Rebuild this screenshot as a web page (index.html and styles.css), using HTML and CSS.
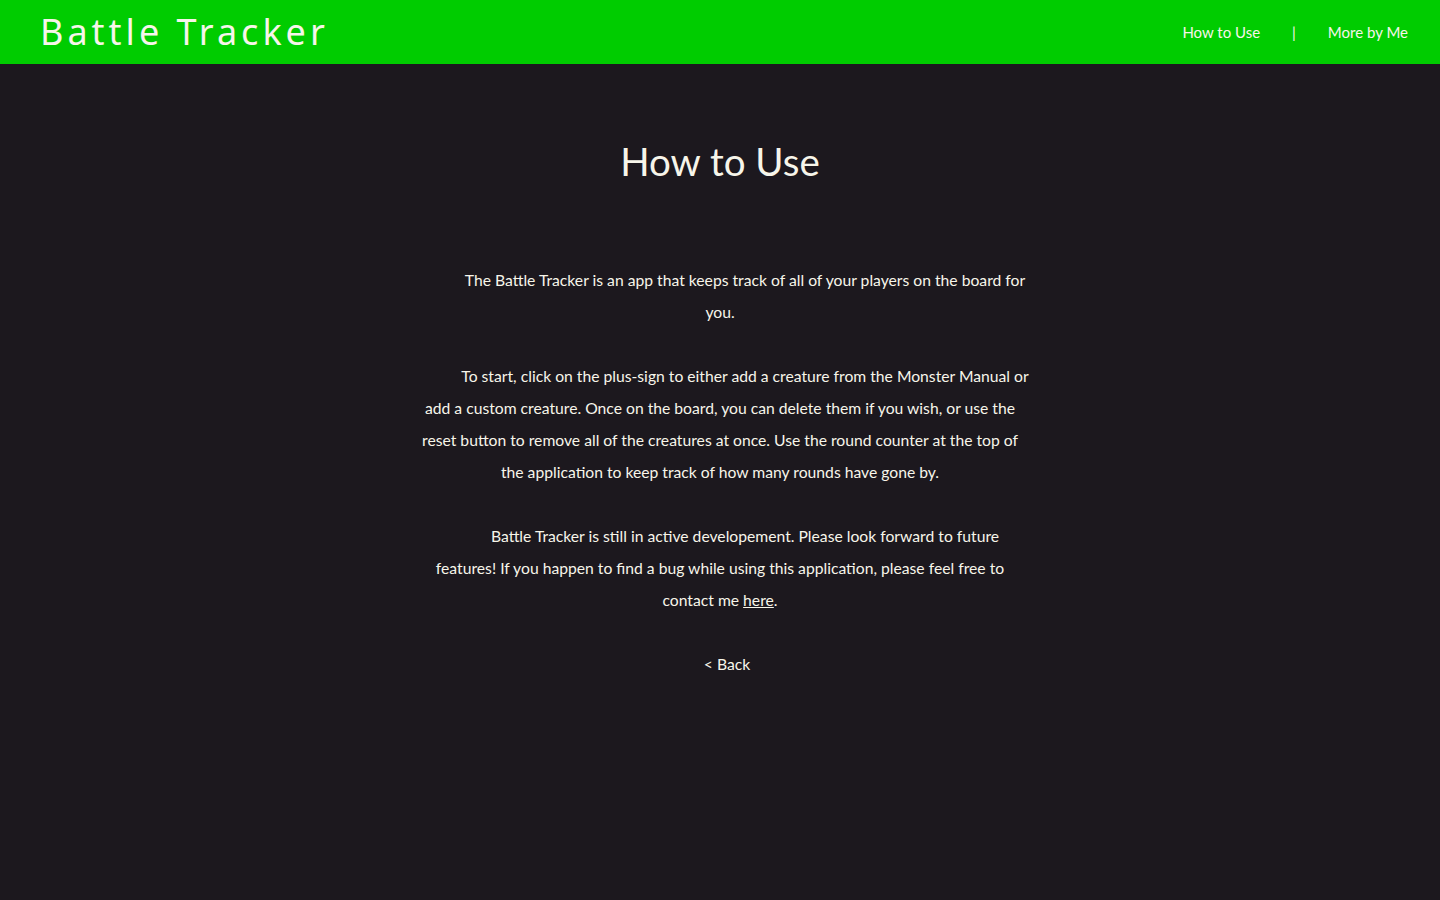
FILE: index.html
```html
<!DOCTYPE html>
<html lang="en">
<head>
<meta charset="utf-8">
<title>Battle Tracker - How to Use</title>
<link rel="stylesheet" href="styles.css">
</head>
<body>
<header class="topbar">
  <div class="brand">Battle Tracker</div>
  <nav class="nav">
    <a class="nav-link" href="#">How to Use</a>
    <span class="nav-sep">|</span>
    <a class="nav-link" href="#">More by Me</a>
  </nav>
</header>
<main class="content">
  <h1 class="title">How to Use</h1>
  <div class="text">
    <p class="para">The Battle Tracker is an app that keeps track of all of your players on the board for you.</p>
    <p class="para">To start, click on the plus-sign to either add a creature from the Monster Manual or add a custom creature. Once on the board, you can delete them if you wish, or use the reset button to remove all of the creatures at once. Use the round counter at the top of the application to keep track of how many rounds have gone by.</p>
    <p class="para">Battle Tracker is still in active developement. Please look forward to future features! If you happen to find a bug while using this application, please feel free to contact me <a class="inline-link" href="#">here</a>.</p>
    <p class="back"><a class="back-link" href="#">&lt; Back</a></p>
  </div>
</main>
</body>
</html>
```
FILE: styles.css
```css
html, body {
  margin: 0;
  padding: 0;
}
body {
  background: #1c181e;
  color: #f7f5ea;
  font-family: "Lato", "Noto Sans", sans-serif;
  min-height: 900px;
}
.topbar {
  height: 64px;
  background: #00cc00;
  display: flex;
  align-items: center;
  justify-content: space-between;
  padding: 0 32px 0 40px;
}
.brand {
  font-family: "Noto Sans", "Open Sans", sans-serif;
  font-size: 36px;
  letter-spacing: 4px;
  color: #f7f5ea;
  line-height: 1;
  margin-top: -1px;
}
.nav {
  display: flex;
  align-items: center;
  gap: 32px;
  font-size: 15px;
}
.nav-link, .nav-sep {
  color: #f7f5ea;
  text-decoration: none;
}
.content {
  display: flex;
  flex-direction: column;
  align-items: center;
}
.title {
  font-weight: 400;
  font-size: 38.5px;
  line-height: 48px;
  margin: 73px 0 0;
}
.text {
  width: 619px;
  margin-top: 79px;
  text-align: center;
  font-size: 15.7px;
  line-height: 32px;
}
.para {
  margin: 0 0 32px;
  text-indent: 50px;
}
.back {
  margin: 0;
  text-indent: 14px;
}
.inline-link, .back-link {
  color: #f7f5ea;
}
.inline-link {
  text-decoration: underline;
}
.back-link {
  text-decoration: none;
}
```
